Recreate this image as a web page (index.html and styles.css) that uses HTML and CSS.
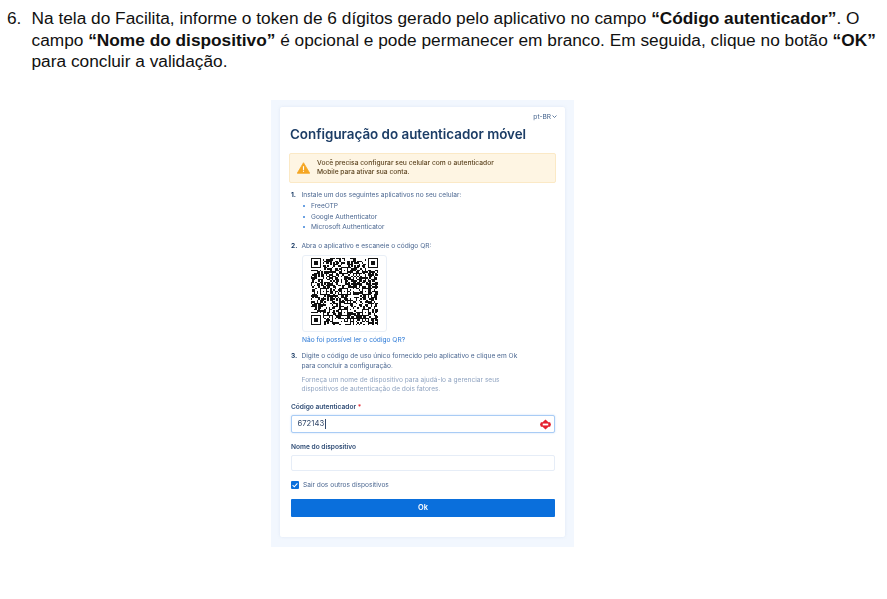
FILE: index.html
```html
<!DOCTYPE html>
<html lang="pt-BR">
<head>
<meta charset="utf-8">
<title>Configuração do autenticador móvel</title>
<link rel="stylesheet" href="styles.css">
</head>
<body>
<div class="step">
  <span class="step-num">6.</span>
  <p class="step-text">Na tela do Facilita, informe o token de 6 dígitos gerado pelo aplicativo no campo <b>“Código autenticador”</b>. O campo <b>“Nome do dispositivo”</b> é opcional e pode permanecer em branco. Em seguida, clique no botão <b>“OK”</b> para concluir a validação.</p>
</div>
<div class="shot">
  <div class="card">
    <div class="locale">pt-BR
      <svg class="chev" viewBox="0 0 10 6"><path d="M1 1l4 4 4-4" fill="none" stroke="#3f5f8a" stroke-width="1.6"/></svg>
    </div>
    <h1 class="title">Configuração do autenticador móvel</h1>
    <div class="alert">
      <svg class="warn" viewBox="0 0 16 14"><path d="M8 .5L15.7 13.5H.3z" fill="#f5a623" stroke="#f5a623" stroke-linejoin="round"/><rect x="7.3" y="4.8" width="1.4" height="4.6" fill="#fff"/><rect x="7.3" y="10.3" width="1.4" height="1.4" fill="#fff"/></svg>
      <p class="alert-text">Você precisa configurar seu celular com o autenticador<br>Mobile para ativar sua conta.</p>
    </div>
    <div class="item first"><span class="num">1.</span><span>Instale um dos seguintes aplicativos no seu celular:</span></div>
    <ul class="apps">
      <li>FreeOTP</li>
      <li>Google Authenticator</li>
      <li>Microsoft Authenticator</li>
    </ul>
    <div class="item second"><span class="num">2.</span><span>Abra o aplicativo e escaneie o código QR:</span></div>
    <div class="qr-box"><svg id="qr" class="qr" viewBox="0 0 45 45" shape-rendering="crispEdges"></svg></div>
    <a class="qr-link" href="#">Não foi possível ler o código QR?</a>
    <div class="item third"><span class="num">3.</span><span>Digite o código de uso único fornecido pelo aplicativo e clique em Ok<br>para concluir a configuração.</span></div>
    <p class="hint">Forneça um nome de dispositivo para ajudá-lo a gerenciar seus<br>dispositivos de autenticação de dois fatores.</p>
    <label class="label code-label">Código autenticador <span class="req">*</span></label>
    <div class="input active"><span class="value">672143</span><span class="caret"></span>
      <svg class="pw" viewBox="0 0 12 12"><path d="M6 .6L9.2 3.6H11L12 6 11 8.4H9.2L6 11.4 2.8 8.4H1L0 6 1 3.6H2.8z" fill="#e5202e"/><rect x="3" y="5" width="6" height="2" fill="#fff"/></svg>
    </div>
    <label class="label name-label">Nome do dispositivo</label>
    <div class="input plain"></div>
    <div class="check-row">
      <span class="check"><svg viewBox="0 0 10 10"><path d="M2 5.2l2.1 2.1L8 3" fill="none" stroke="#fff" stroke-width="1.3"/></svg></span>
      <span>Sair dos outros dispositivos</span>
    </div>
    <div class="btn">Ok</div>
  </div>
</div>
<script src="qr.js"></script>
</body>
</html>
```

FILE: styles.css
```css
* { box-sizing: border-box; }
html, body { margin: 0; padding: 0; background: #fff; }
body { width: 887px; height: 599px; overflow: hidden; }

.step {
  display: flex;
  padding: 8px 0 0 7px;
  font: 17.3px/21.7px "Liberation Sans", Arial, sans-serif;
  color: #111;
}
.step-num { width: 24.5px; flex: none; }
.step-text { margin: 0; width: 850px; }

.shot {
  width: 303px;
  height: 447px;
  margin: 27px 0 0 271px;
  padding: 7px 9px 0;
  background: #f2f7fe;
  filter: blur(.4px);
}
.card {
  height: 430px;
  padding: 5px 9px 0 10px;
  background: #fff;
  border-radius: 2px;
  box-shadow: 0 0 3px rgba(160,185,220,.25);
  font: 6.6px/10px Inter, "Noto Sans", sans-serif;
  color: #4a6690;
}
.locale {
  display: flex;
  justify-content: flex-end;
  align-items: center;
  gap: 1px;
  height: 9px;
  margin-right: -1px;
  color: #3f5f8a;
}
.chev { width: 5px; height: 3px; }
.title {
  margin: 4px 0 0;
  font-size: 13.4px;
  line-height: 18px;
  font-weight: 600;
  color: #1c3d66;
  white-space: nowrap;
}
.alert {
  display: flex;
  align-items: center;
  width: 267px;
  height: 30px;
  margin: 10px 0 0 -1px;
  padding-left: 7px;
  background: #fef5e3;
  border: 1px solid #fbe9c6;
  border-radius: 2px;
}
.warn { width: 13px; height: 12px; flex: none; }
.alert-text {
  margin: 0 0 0 7px;
  font-size: 6.7px;
  font-weight: 500;
  line-height: 9.4px;
  color: #5c4420;
}
.item { display: flex; margin-left: 1px; color: #4a6690; }
.num { width: 10.5px; flex: none; font-weight: 700; color: #1c3d66; }
.first { margin-top: 6.5px; }
.apps {
  list-style: none;
  margin: 1.5px 0 0 12px;
  padding: 0;
}
.apps li {
  position: relative;
  height: 10.5px;
  padding-left: 9px;
  line-height: 10.5px;
}
.apps li::before {
  content: "";
  position: absolute;
  left: 1px;
  top: 4px;
  width: 2px;
  height: 2px;
  border-radius: 50%;
  background: #3a82d8;
}
.second { margin-top: 8px; }
.qr-box {
  display: flex;
  align-items: center;
  justify-content: center;
  width: 85px;
  height: 77px;
  margin: 4px 0 0 12px;
  border: 1px solid #e9eff7;
  border-radius: 3px;
}
.qr { width: 67px; height: 67px; margin-top: -3px; }
.qr-link {
  display: block;
  margin: 3px 0 0 12px;
  color: #2a78d6;
  text-decoration: none;
}
.third { margin-top: 6px; }
.hint {
  margin: 5px 0 0 11.5px;
  line-height: 9.4px;
  color: #8fa3c0;
}
.label {
  display: block;
  margin-left: 1px;
  font-weight: 600;
  color: #2f4c75;
}
.code-label { margin-top: 8px; }
.name-label { margin-top: 9px; }
.req { color: #e5202e; }
.input {
  display: flex;
  align-items: center;
  width: 264px;
  margin: 3px 0 0 1px;
  background: #fff;
  border-radius: 2px;
}
.active {
  height: 18px;
  padding: 0 3px 0 5.5px;
  border: 1px solid #a9ccf5;
  box-shadow: 0 0 2px rgba(80,150,235,.35);
  font-size: 7.7px;
  color: #33496b;
}
.plain { height: 16px; border: 1px solid #e6edf7; }
.caret { width: 1px; height: 10px; margin-left: .5px; background: #33496b; }
.pw { width: 11px; height: 11px; margin-left: auto; }
.check-row {
  display: flex;
  align-items: center;
  gap: 4px;
  height: 10px;
  margin: 9px 0 0 1px;
  color: #4a6690;
}
.check {
  display: flex;
  width: 8px;
  height: 8px;
  border-radius: 1px;
  background: #0a6fdc;
}
.btn {
  display: flex;
  align-items: center;
  justify-content: center;
  width: 264px;
  height: 18px;
  margin: 9px 0 0 1px;
  border-radius: 1px;
  background: #0a6fdc;
  color: #fff;
  font-size: 7.4px;
  font-weight: 600;
}
```

FILE: qr.js
```js
(function () {
  var n = 45, svg = document.getElementById('qr'), d = '';
  var seed = 20240611;
  function rnd() {
    seed = (seed * 1664525 + 1013904223) >>> 0;
    return (seed >>> 16) / 65536;
  }
  function inFinder(x, y, ox, oy) {
    return x >= ox - 1 && x <= ox + 7 && y >= oy - 1 && y <= oy + 7;
  }
  function finder(ox, oy) {
    var p = 'M' + ox + ' ' + oy + 'h7v7h-7zM' + (ox + 1) + ' ' + (oy + 1) + 'v5h5v-5z';
    return p + 'M' + (ox + 2) + ' ' + (oy + 2) + 'h3v3h-3z';
  }
  function align(ox, oy) {
    return 'M' + ox + ' ' + oy + 'h5v5h-5zM' + (ox + 1) + ' ' + (oy + 1) + 'v3h3v-3zM' + (ox + 2) + ' ' + (oy + 2) + 'h1v1h-1z';
  }
  var aligns = [[6, 20], [20, 6], [20, 20], [34, 20], [20, 34], [34, 34]];
  for (var y = 0; y < n; y++) {
    for (var x = 0; x < n; x++) {
      var skip = inFinder(x, y, 0, 0) || inFinder(x, y, 38, 0) || inFinder(x, y, 0, 38);
      for (var i = 0; i < aligns.length; i++) {
        var a = aligns[i];
        if (x >= a[0] && x < a[0] + 5 && y >= a[1] && y < a[1] + 5) skip = true;
      }
      if (!skip && rnd() < 0.52) d += 'M' + x + ' ' + y + 'h1v1h-1z';
    }
  }
  d += finder(0, 0) + finder(38, 0) + finder(0, 38);
  aligns.forEach(function (a) { d += align(a[0], a[1]); });
  var path = document.createElementNS('http://www.w3.org/2000/svg', 'path');
  path.setAttribute('d', d);
  path.setAttribute('fill', '#111');
  path.setAttribute('fill-rule', 'evenodd');
  svg.appendChild(path);
})();
```
